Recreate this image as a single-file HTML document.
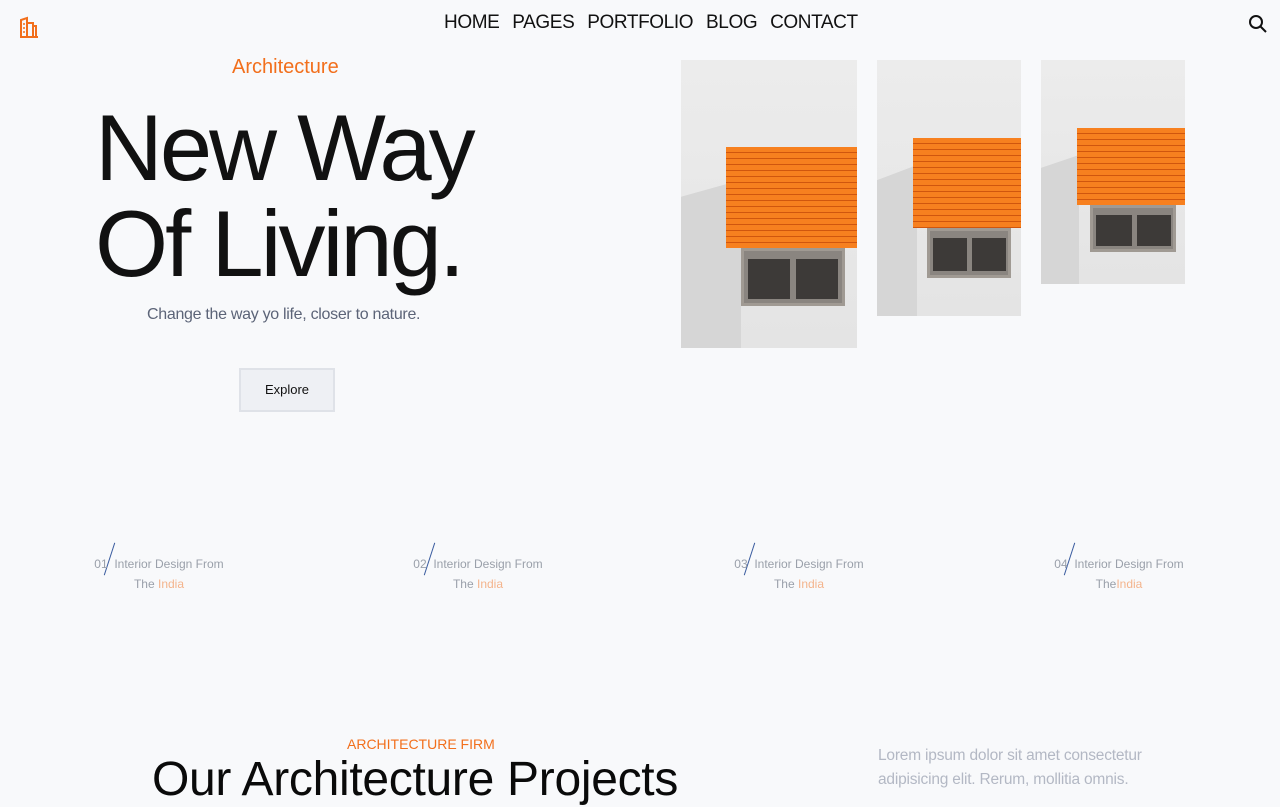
<!DOCTYPE html>
<html><head><style>
*{margin:0;padding:0;box-sizing:border-box}
body{width:1280px;height:800px;overflow:hidden;background:#f8f9fb;font-family:"Liberation Sans",sans-serif;position:relative;color:#111}
.abs{position:absolute}
nav{position:absolute;top:12px;left:444px;font-size:19px;color:#111;white-space:nowrap;letter-spacing:-0.4px;word-spacing:0px}
nav span{margin-right:8px}
.h1{left:95px;font-size:94px;line-height:96px;letter-spacing:-3px;color:#111;font-weight:300;white-space:nowrap}
.img{position:absolute;overflow:hidden;background:linear-gradient(180deg,#ececec,#e4e4e4)}
.shadow{position:absolute;background:#d6d6d6}
.awn{position:absolute;background:repeating-linear-gradient(180deg,#f7801f 0 5px,#d0560e 5px 6px)}
.win{position:absolute;background:#8a8580;border:3px solid #a09a93}
.win i{position:absolute;background:#3d3a38;top:16%;bottom:8%}
.step{position:absolute;top:554px;font-size:12px;color:#9aa0aa;text-align:center;width:140px;line-height:20px}
.step b{font-weight:normal;color:#f4b48c}
.slash{position:absolute;width:1px;height:34px;background:#3b5da0;transform:rotate(18deg)}
</style></head><body>
<svg class="abs" style="left:19px;top:16px" width="20" height="22" viewBox="0 0 20 22" fill="none" stroke="#f26f1c" stroke-width="2"><path d="M1 21H19M2 21V4L8 2V21M8 7H14V21M14 10H17V21"/><path d="M4 8h2M4 12h2M4 16h2" stroke-width="1.5"/></svg>
<nav><span>HOME</span> <span>PAGES</span> <span>PORTFOLIO</span> <span>BLOG</span> <span>CONTACT</span></nav>
<svg class="abs" style="left:1248px;top:14px" width="20" height="20" viewBox="0 0 20 20" fill="none" stroke="#111" stroke-width="2"><circle cx="8" cy="8" r="6"/><path d="M12.5 12.5L18 18"/></svg>
<div class="abs" style="left:232px;top:56px;font-size:20px;color:#f26f1c">Architecture</div>
<div class="abs h1" style="top:100px">New Way</div>
<div class="abs h1" style="top:196px">Of Living.</div>
<div class="abs" style="left:147px;top:306px;font-size:16px;color:#5c6478;letter-spacing:-0.3px">Change the way yo life, closer to nature.</div>
<div class="abs" style="left:239px;top:368px;width:96px;height:44px;background:#eef0f4;border:2px solid #dfe2e8;font-size:13px;text-align:center;line-height:40px;color:#111">Explore</div>

<div class="img" style="left:681px;top:60px;width:176px;height:288px">
 <div class="shadow" style="left:0;top:120px;width:60px;height:168px;clip-path:polygon(0 10%,100% 0,100% 100%,0 100%)"></div>
 <div class="awn" style="left:45px;top:87px;width:131px;height:101px"></div>
 <div class="win" style="left:60px;top:188px;width:104px;height:58px"><i style="left:4px;width:42px"></i><i style="left:52px;width:42px"></i></div>
</div>
<div class="img" style="left:877px;top:60px;width:144px;height:256px">
 <div class="shadow" style="left:0;top:105px;width:40px;height:151px;clip-path:polygon(0 10%,100% 0,100% 100%,0 100%)"></div>
 <div class="awn" style="left:36px;top:78px;width:108px;height:90px"></div>
 <div class="win" style="left:50px;top:168px;width:84px;height:50px"><i style="left:3px;width:34px"></i><i style="left:42px;width:34px"></i></div>
</div>
<div class="img" style="left:1041px;top:60px;width:144px;height:224px">
 <div class="shadow" style="left:0;top:95px;width:38px;height:129px;clip-path:polygon(0 10%,100% 0,100% 100%,0 100%)"></div>
 <div class="awn" style="left:36px;top:68px;width:108px;height:77px"></div>
 <div class="win" style="left:49px;top:145px;width:86px;height:47px"><i style="left:3px;width:36px"></i><i style="left:44px;width:34px"></i></div>
</div>

<div class="slash" style="left:109px;top:542px"></div>
<div class="step" style="left:89px">01 &nbsp;Interior Design From<br>The <b>India</b></div>
<div class="slash" style="left:429px;top:542px"></div>
<div class="step" style="left:408px">02 &nbsp;Interior Design From<br>The <b>India</b></div>
<div class="slash" style="left:749px;top:542px"></div>
<div class="step" style="left:729px">03 &nbsp;Interior Design From<br>The <b>India</b></div>
<div class="slash" style="left:1069px;top:542px"></div>
<div class="step" style="left:1049px">04 &nbsp;Interior Design From<br>The<b>India</b></div>

<div class="abs" style="left:347px;top:736px;font-size:14px;color:#f26f1c">ARCHITECTURE FIRM</div>
<div class="abs" style="left:152px;top:752px;font-size:48px;color:#0a0a0a;letter-spacing:-0.3px;white-space:nowrap">Our Architecture Projects</div>
<div class="abs" style="left:878px;top:744px;font-size:15.5px;color:#b3b8c4;line-height:24px;width:300px;letter-spacing:-0.2px">Lorem ipsum dolor sit amet consectetur adipisicing elit. Rerum, mollitia omnis.</div>
</body></html>
